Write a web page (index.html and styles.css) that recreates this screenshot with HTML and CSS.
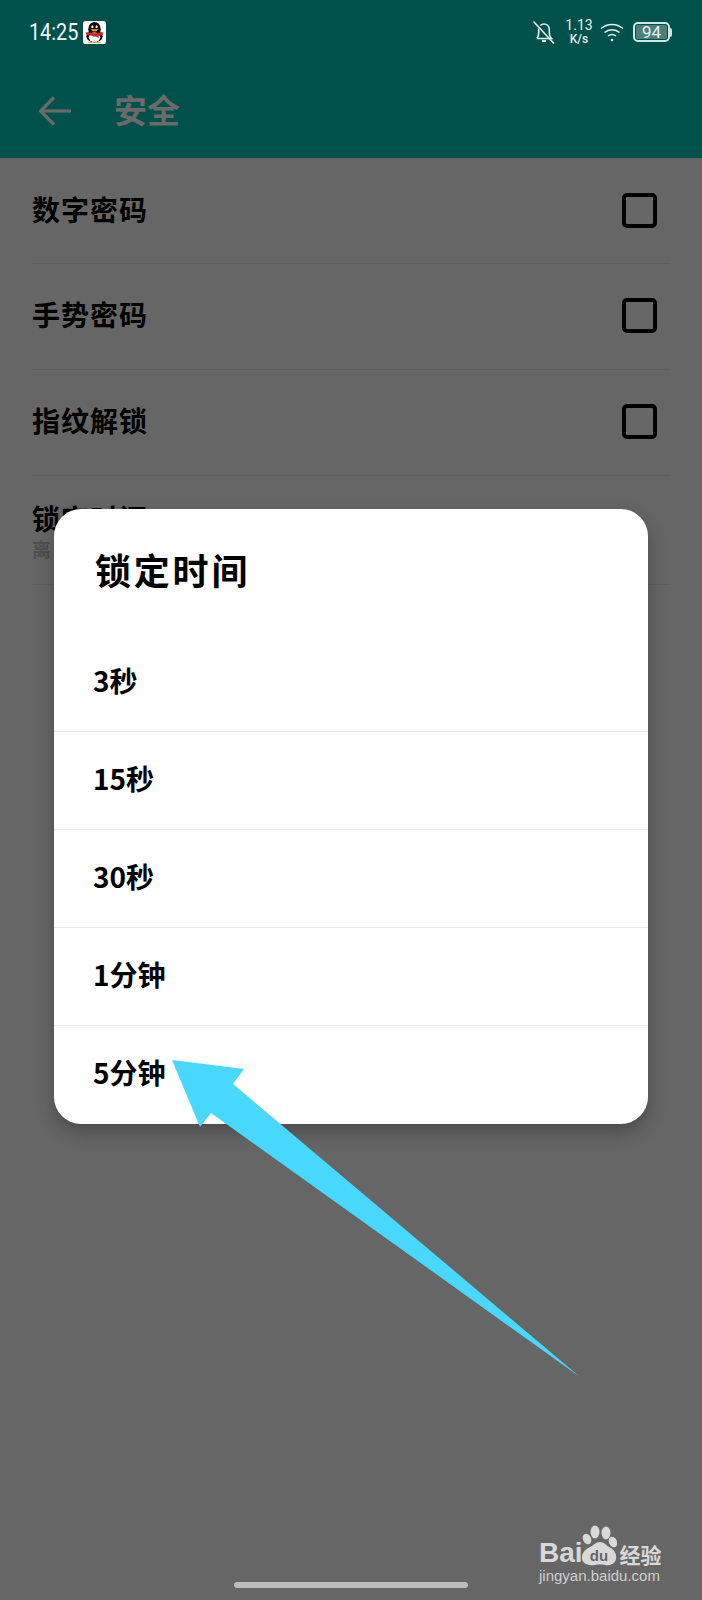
FILE: index.html
```html
<!DOCTYPE html>
<html lang="zh-CN">
<head>
  <meta charset="UTF-8"/>
  <meta name="viewport" content="width=device-width,initial-scale=1.0"/>
  <title>安全</title>
  <link rel="stylesheet" href="styles.css">
</head>
<body>
  <div class="screen">
    <header class="top">
      <div class="status">
        <div class="status-left">
          <span class="time">14:25</span>
          <svg class="qq" viewBox="0 0 24 24" width="23" height="23">
            <rect width="24" height="24" rx="3" fill="#fff"/>
            <ellipse cx="12" cy="8.5" rx="6.5" ry="7.5" fill="#0b0b0b"/>
            <ellipse cx="12" cy="16" rx="8.5" ry="6.5" fill="#0b0b0b"/>
            <ellipse cx="12" cy="17" rx="6" ry="5" fill="#fff"/>
            <ellipse cx="9.8" cy="6" rx="1.1" ry="1.6" fill="#fff"/>
            <ellipse cx="14.2" cy="6" rx="1.1" ry="1.6" fill="#fff"/>
            <path d="M8 8.5h8l-2 2.2h-4z" fill="#f0a51e"/>
            <path d="M3.5 11.5c5 1.6 12 1.6 17 0l.5 2.5c-1.500.8-3 1.200-5 1.400l.6 2.600-3-1.800-3 .3.300-1.100c-2.400-.2-4.500-.6-7.900-1.400z" fill="#d3201f"/>
            <path d="M5 23l3.500-2 2 2zM19 23l-3.500-2-2 2z" fill="#f0a51e"/>
          </svg>
        </div>
        <div class="status-right">
          <svg class="bell" viewBox="0 0 24 24" width="24" height="24" fill="none" stroke="#e6f0ee" stroke-width="1.6">
            <path d="M5 18.5h14.5c-1.600-1.500-2.200-3-2.200-5.500V9.500c0-3-2.200-5.500-5.300-5.500-1.500 0-2.800.6-3.700 1.500"/>
            <path d="M6.800 8.500c-.1.300-.1.700-.1 1V13c0 2.500-.7 4-1.700 5.500"/>
            <path d="M1.500 1.500l20.500 22"/>
            <path d="M10 21h4" stroke-width="2.2"/>
          </svg>
          <div class="speed"><span>1.13</span><span class="unit">K/s</span></div>
          <svg class="wifi" viewBox="0 0 24 20" width="24" height="20" fill="none" stroke="#e6f0ee" stroke-width="1.5">
            <path d="M1 6.500c6.300-5.400 15.700-5.400 22 0"/>
            <path d="M4.500 10.500c4.300-3.600 10.700-3.600 15 0"/>
            <path d="M8 14c2.300-1.800 5.700-1.800 8 0"/>
            <circle cx="12" cy="18" r="1.3" fill="#e6f0ee" stroke="none"/>
          </svg>
          <div class="battery"><div class="battery-level">94</div></div>
          <div class="battery-tip"></div>
        </div>
      </div>
      <div class="toolbar">
        <svg class="back" viewBox="0 0 32 30" width="32" height="30" fill="none" stroke="#686b6a" stroke-width="3.2">
          <path d="M1.500 15H32"/>
          <path d="M15 1.500L1.500 15 15 28.500"/>
        </svg>
        <h1>安全</h1>
      </div>
    </header>

    <ul class="settings">
      <li class="setting"><span>数字密码</span><i class="check"></i></li>
      <li class="setting"><span>手势密码</span><i class="check"></i></li>
      <li class="setting"><span>指纹解锁</span><i class="check"></i></li>
      <li class="setting setting-lock">
        <span>锁定时间</span>
        <small>离</small>
      </li>
    </ul>

    <div class="dialog">
      <h2>锁定时间</h2>
      <div class="option">3秒</div>
      <div class="option">15秒</div>
      <div class="option">30秒</div>
      <div class="option">1分钟</div>
      <div class="option">5分钟</div>
    </div>

    <svg class="pointer" viewBox="0 0 702 1600" width="702" height="1600">
      <polygon points="172,1060 244,1069 233,1084 580,1377 211,1113 200,1127" fill="#49d8fd"/>
    </svg>

    <div class="mark">
      <div class="mark-top">
        <span class="mark-bai">Bai</span>
        <svg class="paw" viewBox="0 0 35 41" width="35" height="41">
          <ellipse cx="13" cy="7" rx="4.5" ry="6.5" fill="#d8d8d8"/>
          <ellipse cx="24" cy="8" rx="4.5" ry="6.5" fill="#d8d8d8"/>
          <ellipse cx="5" cy="14" rx="4" ry="5.5" fill="#d8d8d8" transform="rotate(-25 5 14)"/>
          <ellipse cx="31" cy="17" rx="4" ry="5.5" fill="#d8d8d8" transform="rotate(-25 31 17)"/>
          <path d="M18 17c4 0 6 3 9 5 6 3 8 8 7 12-1 5-6 7-11 6-3-.6-7-.6-10 0-6 1-12-1-13-6-.8-5 2-9 8-12 4-2 6-5 10-5z" fill="#d8d8d8"/>
          <text class="paw-du" x="17" y="36">du</text>
        </svg>
        <span class="mark-cn">经验</span>
      </div>
      <div class="mark-url">jingyan.baidu.com</div>
    </div>

    <div class="home-bar"></div>
  </div>
</body>
</html>
```

FILE: styles.css
```css
* {
  margin: 0;
  padding: 0;
  box-sizing: border-box;
}

body {
  background: #666;
  font-family: "Noto Sans CJK SC", "Liberation Sans", sans-serif;
}

.screen {
  position: relative;
  width: 702px;
  height: 1600px;
  overflow: hidden;
  background: #666;
  color: #000;
}

/* Header */
.top {
  height: 158px;
  background: #00514b;
}

.status {
  display: flex;
  justify-content: space-between;
  align-items: center;
  height: 64px;
  padding: 0 30px 0 29px;
}

.status-left {
  display: flex;
  align-items: center;
  gap: 4px;
}

.time {
  width: 50px;
  font-family: Roboto, sans-serif;
  font-size: 23px;
  color: #f2f7f6;
  transform: scaleX(0.86);
  transform-origin: left;
}

.status-right {
  display: flex;
  align-items: center;
  color: #e6f0ee;
  font-family: Roboto, sans-serif;
}

.speed {
  display: flex;
  flex-direction: column;
  align-items: center;
  width: 30px;
  margin: 0 6px 0 8px;
  font-size: 14px;
  line-height: 15px;
}

.speed .unit {
  font-size: 12px;
  font-weight: 500;
  line-height: 13px;
}

.wifi {
  margin-right: 9px;
}

.battery {
  width: 37px;
  height: 20px;
  padding: 1px;
  border: 2px solid #d5e6e3;
  border-radius: 5px;
}

.battery-level {
  height: 100%;
  background: #4d7f7a;
  border-radius: 2px;
  font-size: 17px;
  line-height: 14px;
  text-align: center;
  color: #e6f0ee;
}

.battery-tip {
  width: 2px;
  height: 9px;
  background: #d5e6e3;
  border-radius: 0 2px 2px 0;
}

.toolbar {
  display: flex;
  align-items: center;
  height: 94px;
  padding-left: 39px;
}

.toolbar h1 {
  margin-left: 43px;
  margin-bottom: 4px;
  font-size: 33px;
  font-weight: 700;
  line-height: 1;
  color: #686b6a;
}

/* Settings list */
.settings {
  list-style: none;
  padding: 0 32px;
}

.setting {
  display: flex;
  justify-content: space-between;
  align-items: center;
  height: 106px;
  padding-right: 13px;
  padding-bottom: 2px;
  border-bottom: 1px solid #5f5f5f;
  font-size: 28px;
  font-weight: 700;
  letter-spacing: 1px;
}

.setting:first-child {
  padding-bottom: 0;
}

.setting > span {
  margin-bottom: 4px;
}

.setting-lock {
  flex-direction: column;
  align-items: flex-start;
  justify-content: flex-start;
  height: 109px;
  padding-top: 24px;
}

.setting small {
  margin-top: -3px;
  font-size: 19px;
  font-weight: 700;
  line-height: 24px;
  color: #4f4f4f;
}

.setting-lock span {
  line-height: 36px;
}

.check {
  width: 35px;
  height: 35px;
  border: 4px solid #000;
  border-radius: 5px;
}

/* Dialog */
.dialog {
  position: absolute;
  left: 54px;
  top: 509px;
  width: 594px;
  height: 615px;
  background: #fff;
  border-radius: 27px;
  box-shadow: 0 8px 18px rgba(0, 0, 0, 0.28);
  overflow: hidden;
}

.dialog h2 {
  height: 125px;
  padding: 34px 0 0 41px;
  font-size: 36px;
  font-weight: 700;
  line-height: 52px;
  letter-spacing: 2.8px;
}

.option {
  display: flex;
  align-items: center;
  height: 98px;
  padding-left: 39px;
  padding-bottom: 6px;
  border-bottom: 1px solid #ebebeb;
  font-size: 28px;
  font-weight: 700;
}

.option:last-child {
  border-bottom: none;
}

/* Annotation arrow over the screenshot */
.pointer {
  position: absolute;
  left: 0;
  top: 0;
}

/* Watermark */
.mark {
  position: absolute;
  left: 539px;
  top: 1525px;
  width: 130px;
  color: #d8d8d8;
}

.mark-top {
  display: flex;
  align-items: flex-end;
  height: 41px;
}

.mark-bai {
  margin-bottom: -1px;
  font-family: "Liberation Sans", sans-serif;
  font-size: 28px;
  font-weight: 700;
  line-height: 28px;
}

.paw {
  margin-left: -1px;
}

.paw-du {
  font-family: "Liberation Sans", sans-serif;
  font-size: 15px;
  font-weight: 700;
  text-anchor: middle;
  fill: #666;
}

.mark-cn {
  margin-left: 3px;
  margin-bottom: -2px;
  font-size: 21px;
  line-height: 28px;
  font-weight: 700;
  white-space: nowrap;
}

.mark-url {
  margin-top: 1px;
  font-family: "Liberation Sans", sans-serif;
  font-size: 15px;
  line-height: 18px;
  color: #cfcfcf;
  white-space: nowrap;
}

.home-bar {
  position: absolute;
  left: 234px;
  top: 1582px;
  width: 234px;
  height: 6px;
  background: #bdbdbd;
  border-radius: 3px;
}
```
